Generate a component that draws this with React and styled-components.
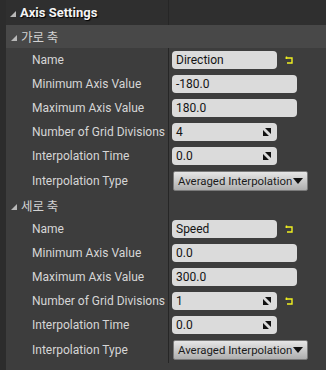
import React from 'react';
import styled, { createGlobalStyle } from 'styled-components';

const Global = createGlobalStyle`
    html, body {
        margin: 0;
        padding: 0;
        background: #3d3d3d;
        font-family: Roboto, "Noto Sans CJK KR", sans-serif;
    }
`

const Panel = styled.div`
    display: flex;
    width: 326px;
    height: 370px;
    background: #3d3d3d;
    overflow: hidden;
`

const Gutter = styled.div`
    width: 6px;
    flex-shrink: 0;
    background: #2c2c2c;
`

const Body = styled.div`
    flex: 1;
    display: flex;
    flex-direction: column;
`

const Header = styled.div`
    display: grid;
    grid-template-columns: 162px 1fr;
    height: 25px;
    background: #2f2f2f;
`

const HeaderTitle = styled.div`
    display: flex;
    align-items: center;
    padding-left: 4px;
    gap: 4px;
    color: #f4f4f4;
    font-weight: bold;
    font-size: 13px;
    text-shadow: 1px 1px 1px #000;
`

const Category = styled.div`
    display: grid;
    grid-template-columns: 162px 1fr;
    height: 23px;
    background: ${p => (p.$active ? '#484848' : 'transparent')};
`

const CategoryTitle = styled.div`
    display: flex;
    align-items: center;
    padding-left: 5px;
    gap: 4px;
    color: #d2d2d2;
    font-size: 12.5px;
    font-family: "Noto Sans CJK KR", Roboto, sans-serif;
`

const Arrow = styled.span`
    width: 0;
    height: 0;
    border-left: 6px solid transparent;
    border-bottom: 6px solid #b8b8b8;
    margin-top: 2px;
`

const Divider = styled.div`
    border-left: 1px solid ${p => (p.$hidden ? 'transparent' : '#262626')};
`

const Row = styled.div`
    display: grid;
    grid-template-columns: 162px 1fr;
    height: ${p => p.$h || 24}px;
`

const Label = styled.div`
    display: flex;
    align-items: center;
    padding-left: 26px;
    color: #d6d6d6;
    font-size: 12px;
    white-space: nowrap;
`

const Value = styled.div`
    display: flex;
    align-items: center;
    border-left: 1px solid #262626;
    padding-left: 3px;
    gap: 8px;
`

const Input = styled.div`
    position: relative;
    box-sizing: border-box;
    width: ${p => p.$w}px;
    height: 18px;
    border-radius: 4px;
    background: #dbdbdb;
    color: #141414;
    font-size: 12px;
    display: flex;
    align-items: center;
    padding-left: 4px;
`

const Spin = styled.svg`
    position: absolute;
    right: 6px;
    top: 5px;
`

const Combo = styled.div`
    box-sizing: border-box;
    width: 135px;
    height: 20px;
    margin-left: 1px;
    border: 1px solid #7a7a7a;
    border-radius: 2px;
    background: linear-gradient(#e6e6e6, #aeaeae);
    color: #1a1a1a;
    font-size: 11.4px;
    display: flex;
    align-items: center;
    padding-left: 4px;
    gap: 1px;
    white-space: nowrap;
    overflow: hidden;
`

const Caret = styled.span`
    flex-shrink: 0;
    width: 0;
    height: 0;
    border-left: 5px solid transparent;
    border-right: 5px solid transparent;
    border-top: 6px solid #111;
`

const SpinIcon = () => (
    <Spin width="8" height="8" viewBox="0 0 8 8">
        <path d="M2 0H8V6Z M0 2V8H6Z" fill="#111" />
    </Spin>
)

const ResetIcon = () => (
    <svg width="8" height="8" viewBox="0 0 8 8">
        <path d="M1.5 0.5V3 M0.5 2H7V7H2" stroke="#f0f020" strokeWidth="1.4" fill="none" />
    </svg>
)

const Field = ({ w, text, spin }) => (
    <Input $w={w}>
        {text}
        {spin && <SpinIcon />}
    </Input>
)

const Section = ({ title, active, name, min, max, grid, gridReset, time }) => (
    <>
        <Category $active={active}>
            <CategoryTitle><Arrow />{title}</CategoryTitle>
            <Divider $hidden={active} />
        </Category>
        <Row>
            <Label>Name</Label>
            <Value><Field w={105} text={name} /><ResetIcon /></Value>
        </Row>
        <Row>
            <Label>Minimum Axis Value</Label>
            <Value><Field w={125} text={min} /></Value>
        </Row>
        <Row>
            <Label>Maximum Axis Value</Label>
            <Value><Field w={125} text={max} /></Value>
        </Row>
        <Row>
            <Label>Number of Grid Divisions</Label>
            <Value><Field w={105} text={grid} spin />{gridReset && <ResetIcon />}</Value>
        </Row>
        <Row>
            <Label>Interpolation Time</Label>
            <Value><Field w={105} text={time} spin /></Value>
        </Row>
        <Row $h={26}>
            <Label>Interpolation Type</Label>
            <Value><Combo>Averaged Interpolation<Caret /></Combo></Value>
        </Row>
    </>
)

export default function App() {
    return (
        <>
            <Global />
            <Panel>
                <Gutter />
                <Body>
                    <Header>
                        <HeaderTitle><Arrow />Axis Settings</HeaderTitle>
                        <Divider />
                    </Header>
                    <Section title="가로 축" active name="Direction" min="-180.0" max="180.0" grid="4" time="0.0" />
                    <Section title="세로 축" name="Speed" min="0.0" max="300.0" grid="1" gridReset time="0.0" />
                </Body>
            </Panel>
        </>
    )
}
